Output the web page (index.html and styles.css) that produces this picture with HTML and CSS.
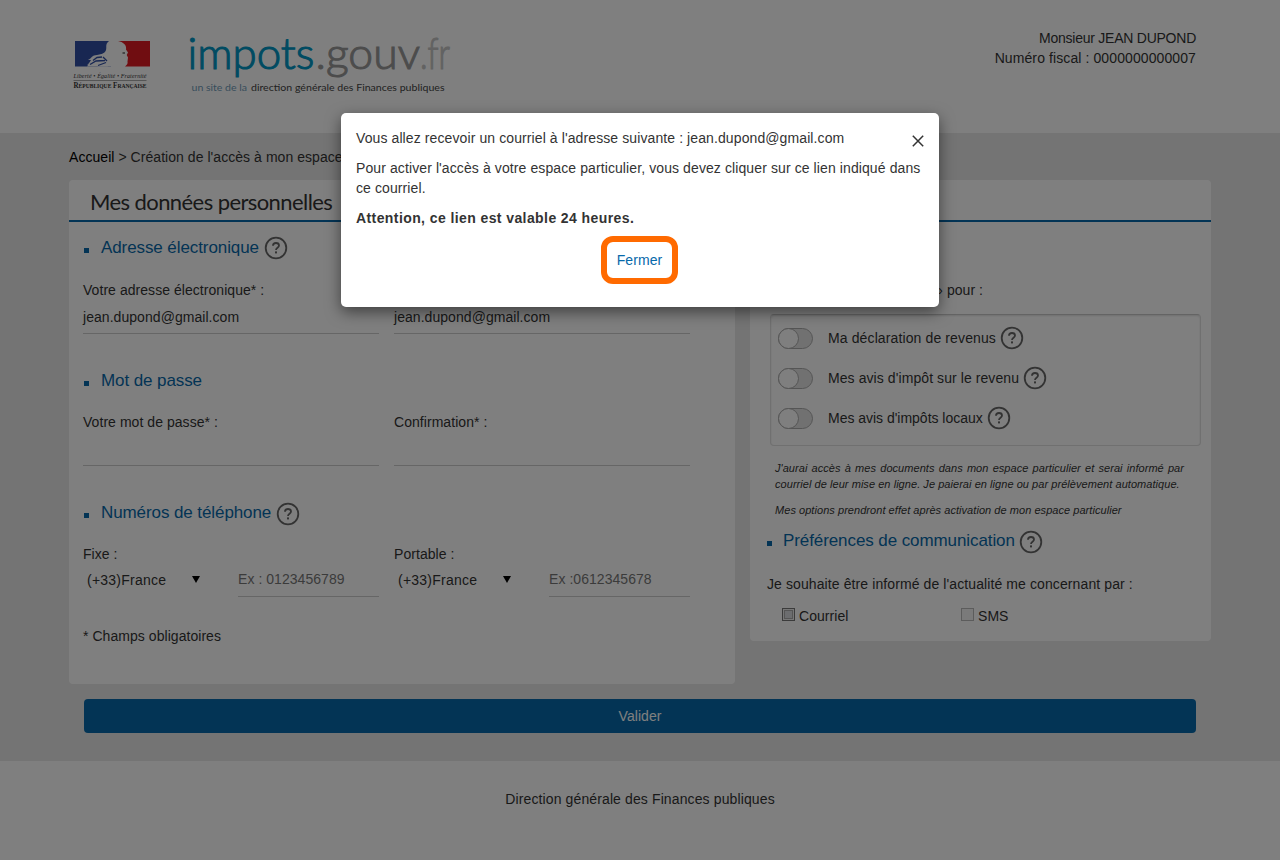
FILE: index.html
```html
<!DOCTYPE html>
<html lang="fr">
<head>
<meta charset="utf-8">
<title>impots.gouv.fr</title>
<link rel="stylesheet" href="styles.css">
</head>
<body>
<svg class="defs" aria-hidden="true">
  <symbol id="help" viewBox="0 0 24 24">
    <circle cx="12" cy="12" r="10.300" fill="none" stroke="#666" stroke-width="1.800"/>
    <path d="M9 9.700C9 7.800 10.200 7 12 7s3 .9 3 2.500c0 2.200-3 2.200-3 4.400" fill="none" stroke="#666" stroke-width="1.800"/>
    <rect x="11" y="15.400" width="2" height="2" fill="#666"/>
  </symbol>
</svg>
<div class="page">
  <header class="header">
    <svg class="logo" width="410" height="90" viewBox="60 15 410 90">
      <rect x="75" y="41" width="36" height="25.500" fill="#304fa5"/>
      <path d="M118 41H150V66.500H125C127 65 128 63.500 127.500 61.500L128 57.500L126.700 55L128 52.500L126 49.500C127 45 123 42 118 41Z" fill="#e11b22"/>
      <path d="M109 41C104 45 108 48 105 52C103 54 100 55 97 57L91 60L87 66.500H118V41Z" fill="#fff"/>
      <path d="M88 60C92 58 92 55 97 55L106 53L103 58L108 66.500H98L94 63L87 65L93 60Z" fill="#fff"/>
      <path d="M93 60.500L97 57.500L102 57M90 64.500L96 61L105 60.500M98 65.500L106 62.500M103 57L107 61" fill="none" stroke="#304fa5" stroke-width="1.300"/>
      <path d="M122.500 53h2.500" stroke="#666" stroke-width="1.500"/>
      <text x="73.500" y="78" class="motto" textLength="73">Liberté • Égalité • Fraternité</text>
      <path d="M73.500 80.500h73" stroke="#555" stroke-width=".5"/>
      <text x="73.500" y="88" class="rf" textLength="73" lengthAdjust="spacingAndGlyphs">R<tspan class="sc">ÉPUBLIQUE</tspan> F<tspan class="sc">RANÇAISE</tspan></text>
      <text x="187.500" y="68.500" class="brand teal" textLength="127" lengthAdjust="spacingAndGlyphs">impots</text>
      <text x="315.500" y="68.500" class="brand grey" textLength="104.500" lengthAdjust="spacingAndGlyphs">.gouv</text>
      <text x="420" y="68.500" class="brand pale" textLength="30" lengthAdjust="spacingAndGlyphs">.fr</text>
      <text x="191.500" y="91" class="tag" fill="#6f9bb8" textLength="55.500" lengthAdjust="spacingAndGlyphs">un site de la</text>
      <text x="251" y="91" class="tag" fill="#444" textLength="193.500" lengthAdjust="spacingAndGlyphs">direction générale des Finances publiques</text>
    </svg>
    <div class="user"><span class="name">Monsieur JEAN DUPOND</span><br><span class="number">Numéro fiscal : 0000000000007</span></div>
  </header>

  <main class="main">
    <div class="crumbs"><a>Accueil</a> &gt; Création de l'accès à mon espace</div>
    <div class="panels">
      <section class="panel left">
        <h1>Mes données personnelles</h1>
        <div class="body">
          <h2 class="first">Adresse électronique<svg class="help"><use href="#help"/></svg></h2>
          <div class="row">
            <div class="field">Votre adresse électronique* :<div class="input">jean.dupond@gmail.com</div></div>
            <div class="field">Confirmation* :<div class="input">jean.dupond@gmail.com</div></div>
          </div>
          <h2>Mot de passe</h2>
          <div class="row">
            <div class="field">Votre mot de passe* :<div class="input"></div></div>
            <div class="field">Confirmation* :<div class="input"></div></div>
          </div>
          <h2>Numéros de téléphone<svg class="help low"><use href="#help"/></svg></h2>
          <div class="row">
            <div class="field">Fixe :<div class="phone"><div class="select">(+33)France<i></i></div><div class="input">Ex : 0123456789</div></div></div>
            <div class="field">Portable :<div class="phone"><div class="select">(+33)France<i></i></div><div class="input">Ex :0612345678</div></div></div>
          </div>
          <p class="required">* Champs obligatoires</p>
        </div>
      </section>
      <section class="panel right">
        <h1></h1>
        <div class="body">
          <p class="intro">Je choisis « en ligne » pour :</p>
          <div class="options">
            <div class="option"><span class="toggle"></span>Ma déclaration de revenus<svg class="help"><use href="#help"/></svg></div>
            <div class="option revenue"><span class="toggle"></span>Mes avis d'impôt sur le revenu<svg class="help"><use href="#help"/></svg></div>
            <div class="option local"><span class="toggle"></span>Mes avis d'impôts locaux<svg class="help"><use href="#help"/></svg></div>
          </div>
          <div class="notes">
            <p>J'aurai accès à mes documents dans mon espace particulier et serai informé par courriel de leur mise en ligne. Je paierai en ligne ou par prélèvement automatique.</p>
            <p>Mes options prendront effet après activation de mon espace particulier</p>
          </div>
          <h2>Préférences de communication<svg class="help low"><use href="#help"/></svg></h2>
          <p class="inform">Je souhaite être informé de l'actualité me concernant par :</p>
          <div class="checks">
            <span class="check"><b class="box active"></b>Courriel</span>
            <span class="check"><b class="box"></b>SMS</span>
          </div>
        </div>
      </section>
    </div>
    <div class="submit">Valider</div>
  </main>
  <footer class="footer">Direction générale des Finances publiques</footer>
</div>

<div class="backdrop">
  <div class="modal">
    <svg class="close" width="12" height="12" viewBox="0 0 12 12"><path d="M.8.8l10.400 10.400M11.200.8L.8 11.200" stroke="#333" stroke-width="1.500"/></svg>
    <p>Vous allez recevoir un courriel à l'adresse suivante : jean.dupond@gmail.com</p>
    <p>Pour activer l'accès à votre espace particulier, vous devez cliquer sur ce lien indiqué dans ce courriel.</p>
    <p class="warn">Attention, ce lien est valable 24 heures.</p>
    <a class="dismiss">Fermer</a>
  </div>
</div>
</body>
</html>
```
FILE: styles.css
```css
* { box-sizing: border-box; }
body { margin: 0; height: 860px; overflow: hidden; font: 14px/20px "Liberation Sans", Arial, sans-serif; letter-spacing: .05px; color: #333; background: #fff; }
p { margin: 0; }
.defs { display: none; }

.header { height: 133px; display: flex; justify-content: space-between; padding: 15px 84px 0 60px; }
.logo { display: block; letter-spacing: 0; }
.user { text-align: right; padding-top: 13px; }
.name { letter-spacing: -.24px; }
.number { letter-spacing: .1px; }
.brand { font: 300 44px Lato, sans-serif; stroke-width: 1.1px; }
.teal { fill: #0096c4; stroke: #0096c4; }
.grey { fill: #999; stroke: #999; }
.pale { fill: #c4c4c4; stroke: #c4c4c4; }
.tag { font: 10px Lato, sans-serif; }
.motto { font: italic 6px "Liberation Serif", serif; fill: #333; }
.rf { font: bold 7.500px "Liberation Serif", serif; fill: #333; }
.sc { font-size: 6px; }

.main { height: 628px; background: #e8e8e8; padding: 14px 69px 0; }
.crumbs { height: 33px; }
.crumbs a { color: #000; }
.panels { height: 519px; display: flex; gap: 15px; align-items: flex-start; }
.panel { background: #fff; border-radius: 4px; }
.left { width: 666px; height: 504px; }
.right { width: 461px; height: 461px; }
h1 { margin: 0; height: 42px; border-bottom: 2px solid #0769aa; padding: 1px 0 0 21px; font: 22px/41px Lato, sans-serif; letter-spacing: -.58px; color: #333; }
.body { padding: 10px 14px 0; }
h2 { margin: 0 0 17px; padding-top: 2px; height: 30px; display: flex; align-items: center; font-size: 17px; font-weight: normal; letter-spacing: -.09px; color: #0769aa; white-space: nowrap; }
h2.first { margin-bottom: 18px; }
h2::before { content: ""; width: 5px; height: 5px; margin: 5px 12px 0 1px; background: #0769aa; }
.help { width: 24px; height: 24px; margin-left: 5px; flex: none; }
.help.low { margin: 2px 0 0 4.500px; }
.row { display: flex; gap: 15px; margin-bottom: 31px; }
.field { width: 296px; }
.input { height: 34px; line-height: 34px; border-bottom: 1px solid #ccc; }
.phone { display: flex; justify-content: space-between; }
.phone .input { width: 141px; height: 33px; line-height: 31px; color: #777; }
.select { width: 117px; height: 32px; display: flex; justify-content: space-between; align-items: center; padding-left: 4px; letter-spacing: .24px; }
.select i { border: 4px solid transparent; border-top: 7px solid #000; border-bottom: 0; margin-top: -2px; }
.required { margin-top: -2px; }

.right .body { padding: 58px 10px 0 17px; }
.intro { width: 216px; display: flex; justify-content: flex-end; white-space: nowrap; }
.options { height: 132px; margin: 14px 0 14px 3px; border: 1px solid #e0e0e0; border-top-color: #c8c8c8; border-radius: 4px; box-shadow: inset 0 1px 2px rgba(0,0,0,.12); padding: 3px 7px; }
.option { height: 40px; display: flex; align-items: center; letter-spacing: .12px; }
.option.revenue { letter-spacing: .08px; }
.option.local { letter-spacing: -.02px; }
.option .help { margin-left: 4px; }
.toggle { width: 35px; height: 21px; margin-right: 15px; border: 1px solid #aaa; border-radius: 11px; background: #e3e3e3; }
.toggle::before { content: ""; display: block; width: 21px; height: 21px; box-sizing: border-box; margin: -1px; border: 1px solid #aaa; border-radius: 50%; background: #fff; }
.notes { width: 409px; margin-left: 8px; font-size: 11px; line-height: 16px; letter-spacing: .05px; font-style: italic; text-align: justify; }
.notes p { margin-bottom: 10px; }
.right h2 { margin: -3px 0 19px; }
.right h2::before { margin: 5px 11px 0 0; }
.inform { letter-spacing: .1px; }
.checks { display: flex; margin: 12px 0 0 15px; }
.check { width: 179px; display: flex; }
.box { width: 13px; height: 13px; margin: 2px 4px 0 0; border: 1px solid #b8b8b8; background: #f5f5f5; }
.box.active { border-color: #777; background: #d8dade; box-shadow: inset 0 0 0 1px #eee, inset 0 0 0 2px #aaa; }
.submit { height: 34px; margin: 0 15px; border-radius: 4px; background: #0769aa; color: #fff; line-height: 34px; text-align: center; }
.footer { padding-top: 28px; text-align: center; letter-spacing: .12px; }

.backdrop { position: absolute; inset: 0; background: rgba(0,0,0,.5); }
.modal { position: relative; width: 598px; height: 194px; margin: 113px auto 0; padding: 15px 14px 0 15px; background: #fff; border-radius: 5px; box-shadow: 0 5px 15px rgba(0,0,0,.5); letter-spacing: .1px; }
.modal p { margin-bottom: 10px; }
.modal .warn { font-weight: bold; letter-spacing: .41px; }
.close { position: absolute; right: 15px; top: 22px; }
.dismiss { display: block; width: 77px; height: 48px; margin: -2px 0 0 245px; border: 6px solid #ff6a00; border-radius: 12px; color: #0769aa; line-height: 36px; text-align: center; }
```
